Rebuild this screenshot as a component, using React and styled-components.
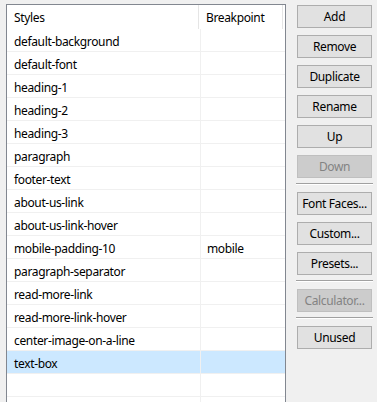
import React from "react";
import styled, { createGlobalStyle } from "styled-components";

const Global = createGlobalStyle`
  html, body { margin: 0; padding: 0; background: #f0f0f0; }
  body { font-family: "Segoe UI", "Noto Sans", "Open Sans", sans-serif; font-size: 12px; letter-spacing: -0.35px; color: #000; }
`;

const Page = styled.div`
  display: flex;
  align-items: flex-start;
  height: 402px;
  overflow: hidden;
  padding: 4px 0 0 6px;
  box-sizing: border-box;
  gap: 11px;
`;

const ListBox = styled.div`
  width: 280px;
  height: 420px;
  flex-shrink: 0;
  box-sizing: border-box;
  border: 1px solid #828790;
  background: #fff;
`;

const Header = styled.div`
  display: grid;
  grid-template-columns: 192px 84px;
  height: 24px;
`;

const HeaderCell = styled.div`
  display: flex;
  align-items: center;
  padding-left: 7px;
  border-right: 1px solid #e5e5e5;
  box-sizing: border-box;
  height: 100%;
  white-space: nowrap;
`;

const Row = styled.div`
  display: grid;
  grid-template-columns: 194px 84px;
  height: 23px;
  box-sizing: border-box;
  border-bottom: 1px solid #f0f0f0;
  background: ${(p) => (p.$selected ? "#cce8ff" : "#fff")};
`;

const Cell = styled.div`
  display: flex;
  align-items: center;
  padding-top: 2px;
  padding-left: ${(p) => (p.$first ? "7px" : "6px")};
  border-right: ${(p) => (p.$first ? "1px solid #f0f0f0" : "none")};
  white-space: nowrap;
  overflow: hidden;
`;

const Side = styled.div`
  display: flex;
  flex-direction: column;
  width: 75px;
  padding-top: 1px;
`;

const Button = styled.button`
  width: 75px;
  height: 23px;
  margin: 0 0 7px 0;
  padding: 0;
  box-sizing: border-box;
  font-family: inherit;
  font-size: 12px;
  letter-spacing: inherit;
  white-space: nowrap;
  background: ${(p) => (p.disabled ? "#cccccc" : "#e1e1e1")};
  border: 1px solid ${(p) => (p.disabled ? "#bfbfbf" : "#adadad")};
  color: ${(p) => (p.disabled ? "#838383" : "#000")};
  display: flex;
  align-items: center;
  justify-content: center;
`;

const Separator = styled.div`
  margin: -2px -1px 7px -1px;
  height: 2px;
  border-top: 1px solid #a0a0a0;
  border-bottom: 1px solid #ffffff;
  box-sizing: border-box;
`;

const styles = [
  ["default-background", ""],
  ["default-font", ""],
  ["heading-1", ""],
  ["heading-2", ""],
  ["heading-3", ""],
  ["paragraph", ""],
  ["footer-text", ""],
  ["about-us-link", ""],
  ["about-us-link-hover", ""],
  ["mobile-padding-10", "mobile"],
  ["paragraph-separator", ""],
  ["read-more-link", ""],
  ["read-more-link-hover", ""],
  ["center-image-on-a-line", ""],
  ["text-box", ""],
  ["", ""],
  ["", ""],
];

export default function App() {
  return (
    <>
      <Global />
      <Page>
        <ListBox>
          <Header>
            <HeaderCell>Styles</HeaderCell>
            <HeaderCell>Breakpoint</HeaderCell>
          </Header>
          {styles.map(([name, bp], i) => (
            <Row key={i} $selected={name === "text-box"}>
              <Cell $first>{name}</Cell>
              <Cell>{bp}</Cell>
            </Row>
          ))}
        </ListBox>
        <Side>
          <Button>Add</Button>
          <Button>Remove</Button>
          <Button>Duplicate</Button>
          <Button>Rename</Button>
          <Button>Up</Button>
          <Button disabled>Down</Button>
          <Separator />
          <Button>Font Faces...</Button>
          <Button>Custom...</Button>
          <Button>Presets...</Button>
          <Separator />
          <Button disabled>Calculator...</Button>
          <Separator />
          <Button>Unused</Button>
        </Side>
      </Page>
    </>
  );
}
